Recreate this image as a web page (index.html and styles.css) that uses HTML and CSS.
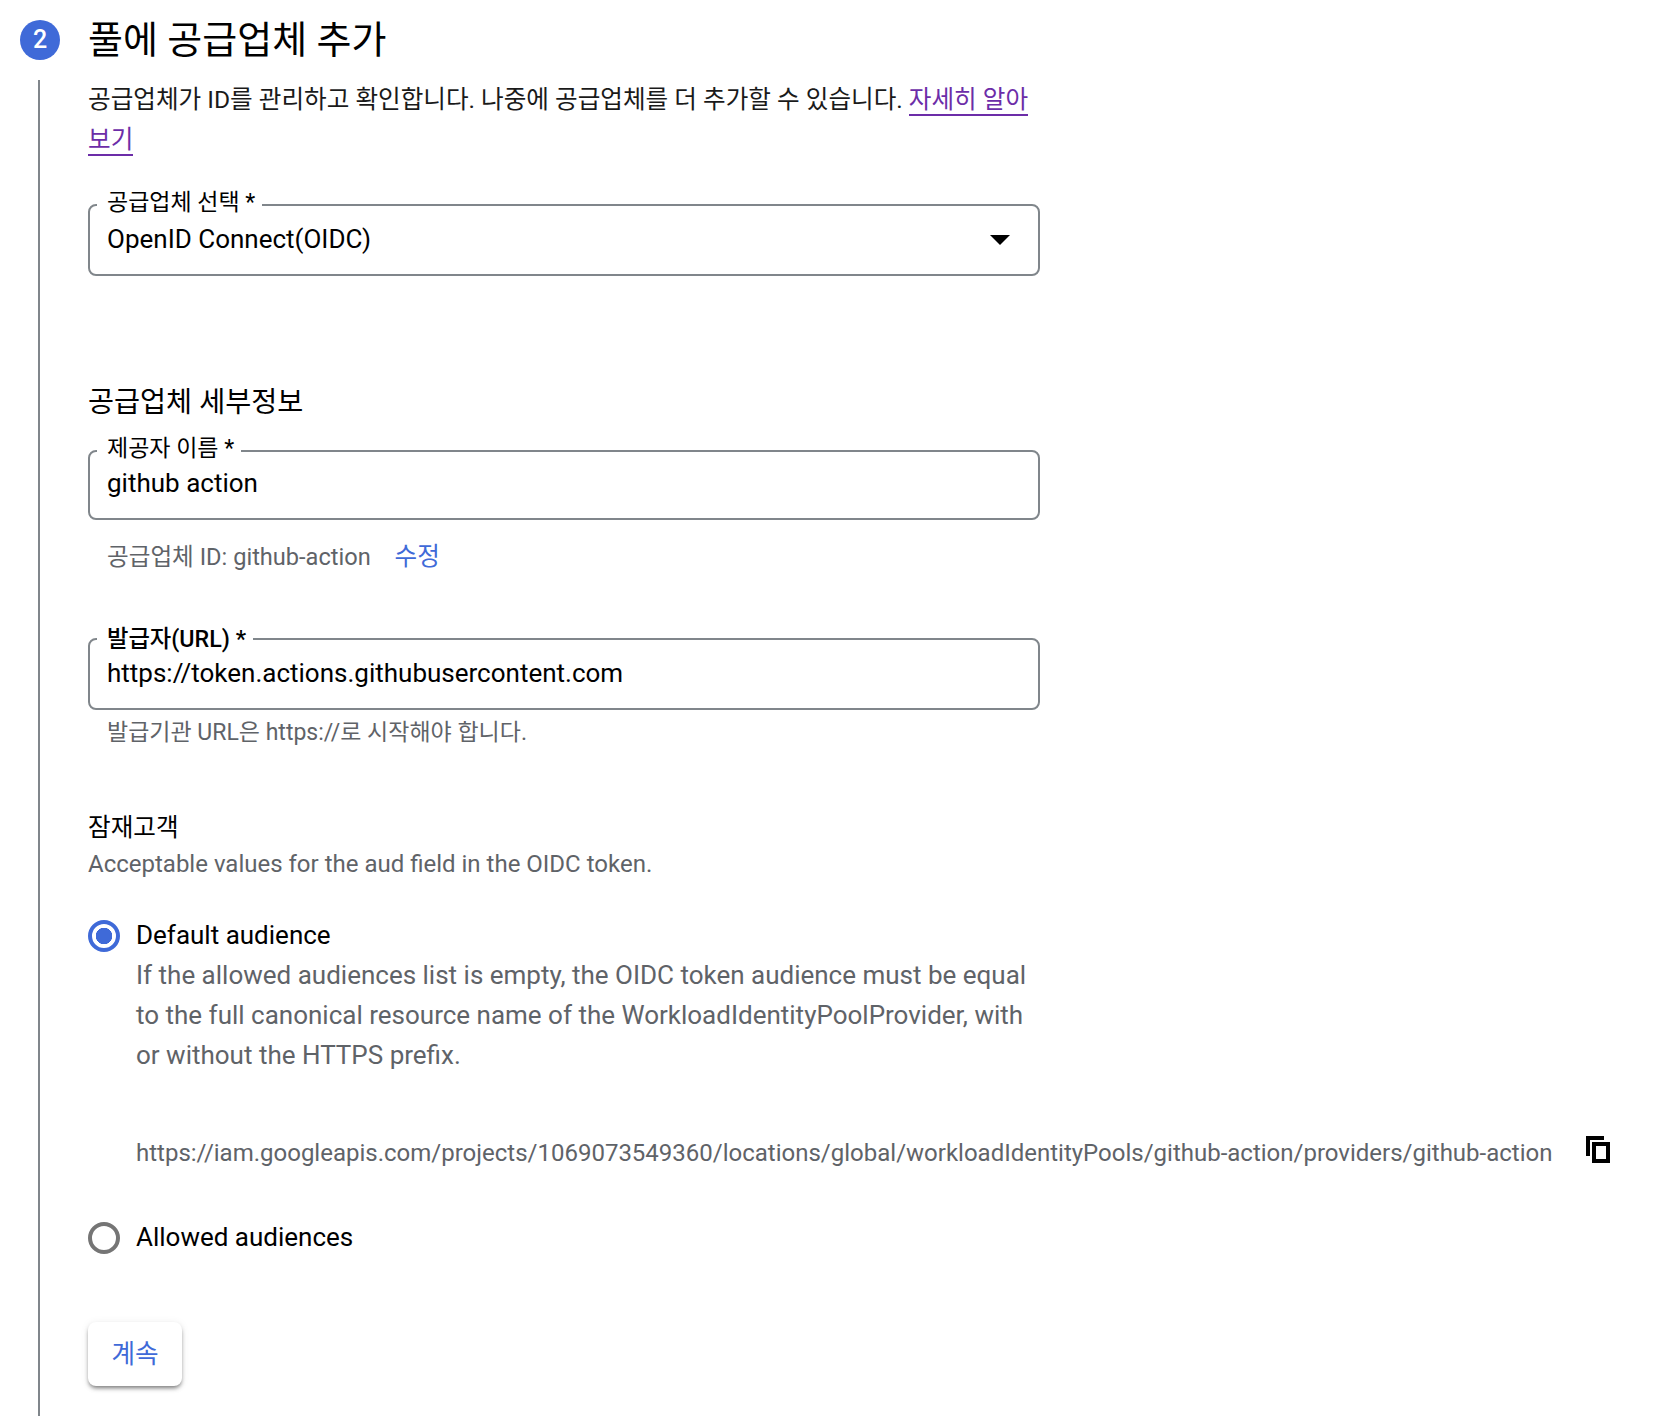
FILE: index.html
```html
<!DOCTYPE html>
<html lang="ko">
<head>
    <meta charset="UTF-8">
    <meta name="viewport" content="width=device-width, initial-scale=1.0">
    <title>풀에 공급업체 추가</title>
    <link rel="stylesheet" href="styles.css">
</head>
<body>
    <div class="step-head">
        <span class="step-badge">2</span>
        <h1>풀에 공급업체 추가</h1>
    </div>
    <div class="step-body">
        <p class="intro">공급업체가 ID를 관리하고 확인합니다. 나중에 공급업체를 더 추가할 수 있습니다. <a href="#" class="learn-link">자세히 알아 보기</a></p>

        <fieldset class="field field-select">
            <legend>공급업체 선택 *</legend>
            <span class="field-value">OpenID Connect(OIDC)</span>
            <span class="select-arrow"></span>
        </fieldset>

        <h2>공급업체 세부정보</h2>

        <fieldset class="field field-name">
            <legend>제공자 이름 *</legend>
            <span class="field-value">github action</span>
        </fieldset>
        <p class="hint hint-id">공급업체 ID: github-action <a href="#" class="edit-link">수정</a></p>

        <fieldset class="field field-issuer">
            <legend>발급자(URL) *</legend>
            <span class="field-value">https://token.actions.githubusercontent.com</span>
        </fieldset>
        <p class="hint hint-issuer">발급기관 URL은 https://로 시작해야 합니다.</p>

        <h3>잠재고객</h3>
        <p class="aud-desc">Acceptable values for the aud field in the OIDC token.</p>

        <div class="radio-row radio-default">
            <span class="radio radio-on"></span>
            <div class="radio-text">
                <div class="radio-label">Default audience</div>
                <p class="radio-desc">If the allowed audiences list is empty, the OIDC token audience must be equal to the full canonical resource name of the WorkloadIdentityPoolProvider, with or without the HTTPS prefix.</p>
            </div>
        </div>

        <div class="aud-url">
            <span>https://iam.googleapis.com/projects/1069073549360/locations/global/workloadIdentityPools/github-action/providers/github-action</span>
            <svg class="copy-icon" viewBox="0 0 24 27" width="24" height="27"><path fill-rule="evenodd" d="M0 0h18v4H4v16H0zM6 6h18v21H6zM10 10v13h10V10z"/></svg>
        </div>

        <div class="radio-row radio-allowed">
            <span class="radio"></span>
            <div class="radio-label">Allowed audiences</div>
        </div>

        <button class="continue-btn">계속</button>
    </div>
</body>
</html>
```

FILE: styles.css
```css
* {
    box-sizing: border-box;
}
html, body {
    height: 100%;
}
body {
    margin: 0;
    display: flex;
    flex-direction: column;
    overflow: hidden;
    background-color: #fff;
    color: #000;
    font-family: Roboto, "Noto Sans CJK KR", sans-serif;
    font-size: 24px;
}
p, h1, h2, h3 {
    margin: 0;
    font-weight: 400;
}
.step-head {
    display: flex;
    align-items: center;
    gap: 28px;
    padding: 20px 0 0 20px;
    height: 60px;
}
.step-badge {
    width: 40px;
    height: 40px;
    border-radius: 50%;
    background-color: #3f6ad8;
    color: #fff;
    font-size: 25px;
    font-weight: 500;
    line-height: 40px;
    text-align: center;
}
h1 {
    font-size: 38px;
    line-height: 40px;
}
.step-body {
    flex: 1;
    margin-left: 38px;
    margin-top: 20px;
    padding-left: 48px;
    border-left: 2px solid #80868b;
}
.intro {
    width: 950px;
    font-size: 24.6px;
    line-height: 40px;
    color: #1a1a1a;
}
.learn-link {
    color: #6c2da8;
    text-decoration: none;
    border-bottom: 2px solid #6c2da8;
}
.field {
    width: 952px;
    margin: 0;
    padding: 0 18px 13px 17px;
    border: 2px solid #80868b;
    border-radius: 8px;
    display: flex;
    align-items: center;
    font-size: 26px;
}
.field legend {
    margin-left: -10px;
    padding: 0 7px 4px 10px;
    font-size: 23px;
    line-height: 24px;
}
.field-select {
    margin-top: 31px;
    height: 85px;
    padding-bottom: 15px;
    justify-content: space-between;
}
.field-name {
    margin-top: 14px;
    height: 83px;
    padding-bottom: 17px;
}
.field-issuer {
    margin-top: 55px;
    height: 83px;
}
.field-issuer legend {
    padding-bottom: 0;
    font-size: 23.3px;
    font-weight: 500;
}
.field-value {
    line-height: 40px;
}
.select-arrow {
    width: 0;
    height: 0;
    margin-top: 2px;
    margin-right: 10px;
    border-left: 10px solid transparent;
    border-right: 10px solid transparent;
    border-top: 10px solid #000;
}
h2 {
    margin-top: 107px;
    font-size: 28.3px;
    line-height: 40px;
}
.hint {
    padding-left: 19px;
    color: #5f6368;
    font-size: 23px;
    line-height: 30px;
}
.hint-id {
    margin-top: 22px;
    font-size: 23.6px;
}
.edit-link {
    margin-left: 18px;
    color: #3f6ad8;
    font-size: 24.6px;
    text-decoration: none;
}
.hint-issuer {
    margin-top: 8px;
}
h3 {
    margin-top: 61px;
    font-size: 24.6px;
    line-height: 38px;
}
.aud-desc {
    color: #5f6368;
    line-height: 34px;
}
.radio-row {
    display: flex;
    gap: 16px;
}
.radio-default {
    margin-top: 34px;
}
.radio {
    flex: none;
    width: 32px;
    height: 32px;
    margin-top: 5px;
    border: 4px solid #757575;
    border-radius: 50%;
    background-color: #fff;
}
.radio-on {
    border-color: #3f6ad8;
    background: radial-gradient(circle, #3f6ad8 0 8px, #fff 8.5px);
}
.radio-label {
    font-size: 26px;
    line-height: 40px;
}
.radio-text {
    width: 904px;
}
.radio-desc {
    color: #5f6368;
    font-size: 26px;
    line-height: 40px;
}
.aud-url {
    display: flex;
    align-items: center;
    justify-content: space-between;
    width: 1474px;
    margin-top: 61px;
    margin-left: 48px;
    color: #5f6368;
}
.copy-icon {
    flex: none;
    margin-bottom: 6px;
}
.radio-allowed {
    margin-top: 48px;
}
.continue-btn {
    display: block;
    width: 94px;
    height: 64px;
    margin-top: 65px;
    padding: 0 0 5px;
    border: 0;
    border-radius: 8px;
    background-color: #fff;
    color: #3f6ad8;
    font: inherit;
    font-size: 25.6px;
    box-shadow: 0 3px 4px -1px rgba(0, 0, 0, 0.5), 0 1px 8px rgba(0, 0, 0, 0.08);
}
```
